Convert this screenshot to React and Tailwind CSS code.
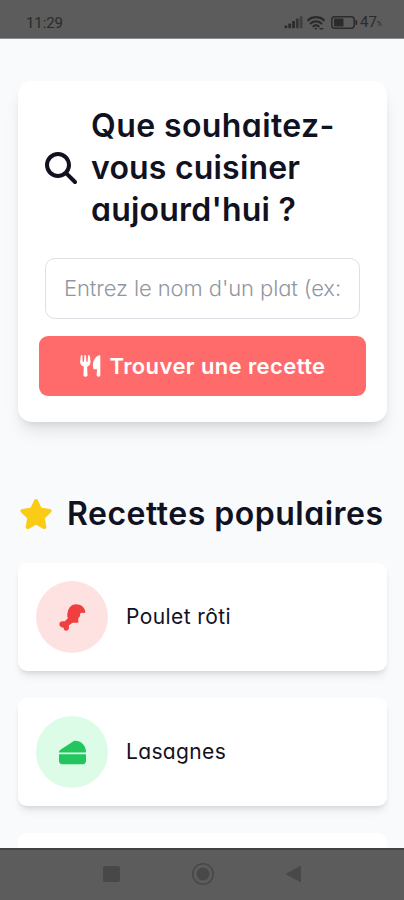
import React from 'react';
import { FaMagnifyingGlass, FaStar, FaCheese } from 'react-icons/fa6';

const DrumstickIcon = ({ className }) => (
  <svg className={className} viewBox="0 0 80 80" fill="currentColor">
    <path d="M50 1C66 1 76 10 78 24C77 28 73 27 70 26C64 25 60 30 63 36C57 38 56 44 58 54C53 57 44 54 39 56L29 64C31 70 30 77 23 79C17 80 14 76 14 70C8 70 1 67 1 60C1 52 9 49 16 52L26 43C24 36 24 30 26 23C29 10 38 1 50 1Z" />
  </svg>
);

const ForkKnifeIcon = ({ className }) => (
  <svg className={className} viewBox="0 0 62 66" fill="currentColor">
    <path d="M4 1h2.5l1 19h4L12.500 1h5l1 19h4L23.500 1H26c2 0 3 2 3.500 4L31 20c1 8-4 13-10 15.500l1 26c0 2-2 3.500-6 3.500s-6-1.500-6-3.500l1-26C4 33-1 28 0 20L1.500 5C1.800 3 2.500 1 4 1Z" />
    <path d="M57 1c2 0 3.500 1 3.500 3v57c0 3-2 4-5 4s-6-1-6-4l1-18h-7c-3 0-4-2-4.500-5C36 21 43 6 57 1Z" />
  </svg>
);

const recipes = [
  {
    name: 'Poulet rôti',
    icon: DrumstickIcon,
    circle: 'bg-[#fee2e2]',
    color: 'text-[#ef3f3f]',
    text: 'tracking-[0.4px]'
  },
  {
    name: 'Lasagnes',
    icon: FaCheese,
    circle: 'bg-[#dcfce7]',
    color: 'text-[#22c55e]',
    text: 'tracking-[0.35px]'
  }
];

const StatusBar = () => (
  <div className="h-[39px] shrink-0 bg-[#5c5c5c] border-b border-[#8b8b8b] flex items-start justify-between pt-[14px] pl-[26px] pr-[22px] text-[#2b2b2b]">
    <span className="font-[Roboto] text-[15px] leading-[18px] tracking-[-0.1px]">11:29</span>
    <div className="flex items-center h-[17px]">
      {/* Signal strength */}
      <svg width="20" height="13" viewBox="0 0 20 13" fill="currentColor">
        <rect x="0.5" y="9.5" width="2.8" height="2.8" rx="0.8" />
        <rect x="4.3" y="7.5" width="2.8" height="4.8" rx="0.8" />
        <rect x="8.1" y="5" width="2.8" height="7.3" rx="0.8" />
        <rect x="11.9" y="2.5" width="2.8" height="9.8" rx="0.8" opacity="0.8" />
        <rect x="15.7" y="0.3" width="2.8" height="12" rx="0.8" opacity="0.6" />
      </svg>
      {/* Wifi */}
      <svg className="ml-[3px]" width="18" height="14" viewBox="0 0 18 14" fill="none" stroke="currentColor" strokeWidth="2.2" strokeLinecap="round">
        <path d="M1 4.2C5.5 0.2 12.5 0.2 17 4.2" />
        <path d="M3.6 7.4C6.7 4.7 11.3 4.7 14.4 7.4" />
        <path d="M6.3 10.4C7.9 9 10.1 9 11.7 10.4" />
        <path d="M8.5 12.6h0.8M13.2 12.8h2.4" strokeWidth="1.6" />
      </svg>
      {/* Battery */}
      <svg className="ml-[6px]" width="27" height="13" viewBox="0 0 27 13" fill="none" stroke="currentColor">
        <rect x="0.8" y="0.8" width="22.4" height="11.4" rx="3" strokeWidth="1.5" />
        <rect x="3" y="2.6" width="9.5" height="7.8" rx="1" fill="currentColor" stroke="none" />
        <path d="M25.3 5v3" strokeWidth="1.8" strokeLinecap="round" />
      </svg>
      <span className="ml-[2px] font-[Roboto] text-[15px] leading-[17px]">47</span>
      <span className="font-[Roboto] text-[7px] leading-[17px] pt-[4px]">%</span>
    </div>
  </div>
);

const SearchCard = () => (
  <div className="h-[341px] shrink-0 bg-white rounded-[14px] shadow-[0_12px_18px_-4px_rgba(0,0,0,0.11),0_4px_7px_-3px_rgba(0,0,0,0.1)] pt-[24px] px-[21px]">
    <div className="flex items-center pl-[6px]">
      <FaMagnifyingGlass className="w-8 h-8 shrink-0" />
      <h2 className="ml-[14px] text-[32px] font-[560] leading-[42px] whitespace-nowrap">
        <span className="block tracking-[0.4px]">Que souhaitez-</span>
        <span className="block tracking-[0.2px]">vous cuisiner</span>
        <span className="block tracking-[0.2px]">aujourd'hui ?</span>
      </h2>
    </div>
    <div className="mt-[27px] mx-[6px] h-[61px] rounded-[10px] border border-[#dcdfe4] px-[18px] flex items-center overflow-hidden">
      <span className="text-[22px] font-light text-[#92979f] whitespace-nowrap tracking-[-0.1px]">Entrez le nom d'un plat (ex:</span>
    </div>
    <button className="mt-[17px] w-full h-[60px] rounded-[9px] bg-[#ff6b6b] text-white flex items-center justify-center">
      <ForkKnifeIcon className="w-[21px] h-[22px] shrink-0" />
      <span className="ml-[9px] text-[22px] font-semibold whitespace-nowrap tracking-[0.4px]">Trouver une recette</span>
    </button>
  </div>
);

const RecipeCard = ({ recipe }) => {
  const Icon = recipe.icon;
  return (
    <div className="h-[108px] shrink-0 bg-white rounded-[9px] shadow-[0_7px_9px_-2px_rgba(0,0,0,0.08),0_3px_5px_-2px_rgba(0,0,0,0.1)] flex items-center pl-[18px]">
      <div className={`w-[72px] h-[72px] rounded-full flex items-center justify-center ${recipe.circle}`}>
        <Icon className={`w-[27px] h-[27px] ${recipe.color}`} />
      </div>
      <span className={`ml-[18px] text-[21px] whitespace-nowrap ${recipe.text}`}>{recipe.name}</span>
    </div>
  );
};

const NavBar = () => (
  <div className="h-[52px] shrink-0 bg-[#5c5c5c] border-t-2 border-[#434343] flex items-center justify-between pl-[103px] pr-[102px] pb-[2px] text-[#484848]">
    <div className="w-[17px] h-[16px] rounded-[2px] bg-current" />
    <svg width="24" height="24" viewBox="0 0 24 24" fill="none" stroke="currentColor">
      <circle cx="12" cy="12" r="10.2" strokeWidth="1.6" />
      <circle cx="12" cy="12" r="6.5" fill="currentColor" stroke="none" />
    </svg>
    <svg width="17" height="18" viewBox="0 0 17 18" fill="currentColor">
      <path d="M0.5 9L16 0.5v17z" />
    </svg>
  </div>
);

const App = () => {
  return (
    <div className="w-full h-[900px] overflow-hidden flex flex-col bg-[#f9fafc] text-[#11111f] font-[Inter,sans-serif] [font-feature-settings:'cv11']">
      <StatusBar />

      <div className="flex-1 min-h-0 overflow-hidden pt-[42px] pl-[18px] pr-[17px] flex flex-col">
        <SearchCard />

        {/* Popular recipes */}
        <div className="mt-[71px] h-[42px] shrink-0 flex items-center pl-[1px]">
          <FaStar className="w-[34px] h-[34px] shrink-0 text-[#facc15]" />
          <h2 className="ml-[14px] text-[32px] font-[560] leading-[42px] whitespace-nowrap tracking-[0.5px]">Recettes populaires</h2>
        </div>

        <div className="mt-[28px] flex flex-col gap-[27px]">
          {recipes.map(r => (
            <RecipeCard key={r.name} recipe={r} />
          ))}
          <div className="h-[108px] shrink-0 bg-white rounded-[9px]" />
        </div>
      </div>

      <NavBar />
    </div>
  );
};

export default App;
